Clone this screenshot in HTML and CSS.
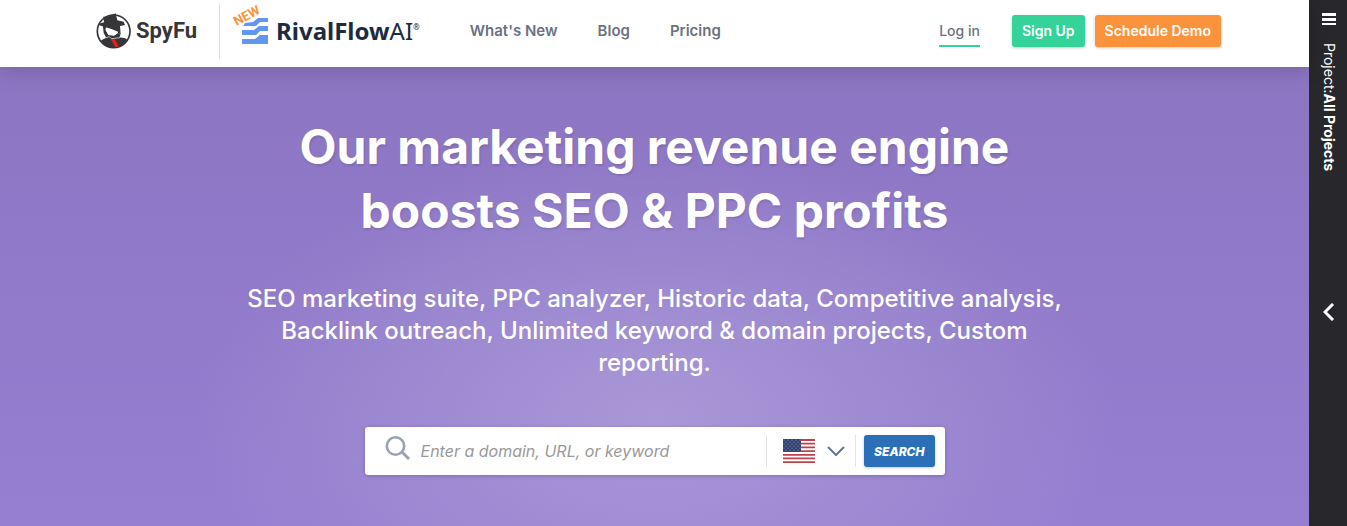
FILE: index.html
```html
<!DOCTYPE html>
<html lang="en">
<head>
    <meta charset="UTF-8">
    <meta name="viewport" content="width=device-width, initial-scale=1.0">
    <title>SpyFu</title>
    <link rel="stylesheet" href="styles.css">
</head>
<body>

<div class="page">
    <header class="header">
        <a href="#" class="logo">
            <svg class="logo-icon" width="36" height="36" viewBox="0 0 108 108">
                <circle cx="53" cy="55" r="49" fill="#fff" stroke="#363638" stroke-width="5"/>
                <path d="M22 11 L34 11 L59 1 L64 22 L83 26 L87 36 L72 39 L74 64 L66 61 L66 56 L46 48 L10 37 L8 32 L24 28 Z" fill="#363638"/>
                <path d="M20 34 L32 37 L28 50 L37 66 L54 68 L66 60 L74 65 L70 73 L88 76 L94 80 L80 96 L66 104 L42 104 L24 94 L14 84 L30 73 L23 60 Z" fill="#363638"/>
                <path d="M33 48 L64 57 L63 62 L53 67 L38 66 L31 54 Z" fill="#fff"/>
                <path d="M24 76 L40 71 L46 77 L56 76 L72 74" fill="none" stroke="#fff" stroke-width="2"/>
                <path d="M44 79 L56 78 L61 87 L68 102 L58 102 Z" fill="#ed1c24"/>
            </svg>
            <span class="logo-text">SpyFu</span>
        </a>
        <a href="#" class="rival">
            <span class="badge-new">NEW</span>
            <svg width="26" height="26" viewBox="0 0 26 26" fill="#6296f3">
                <path d="M3 5 L11 4 L16 0 H26 V4 H18 L14 8 H1 Z"/>
                <path d="M0 12 H12 L17 8 H26 V13 H18 L14 17 H0 Z"/>
                <path d="M0 21 H13 L18 17 H26 V26 H0 Z"/>
            </svg>
            <span class="rival-text">RivalFlow<span class="thin">AI</span><sup>®</sup></span>
        </a>
        <nav class="nav">
            <a href="#">What's New</a>
            <a href="#">Blog</a>
            <a href="#">Pricing</a>
        </nav>
        <div class="account">
            <a href="#" class="login">Log in</a>
            <button type="button" class="btn btn-green">Sign Up</button>
            <button type="button" class="btn btn-orange">Schedule Demo</button>
        </div>
    </header>

    <main class="hero">
        <h1>Our marketing revenue engine<br>boosts SEO &amp; PPC profits</h1>
        <p>SEO marketing suite, PPC analyzer, Historic data, Competitive analysis, Backlink outreach, Unlimited keyword &amp; domain projects, Custom reporting.</p>
        <form class="search">
            <label for="query" class="search-icon">
                <svg width="26" height="26" viewBox="0 0 26 26" fill="none" stroke="#9aa3b2" aria-label="Search">
                    <circle cx="10.5" cy="10" r="8.7" stroke-width="2.6"/>
                    <path d="M17 16 L24 23" stroke-width="3"/>
                </svg>
            </label>
            <input type="text" id="query" name="query" placeholder="Enter a domain, URL, or keyword">
            <div class="country">
                <svg width="32" height="24" viewBox="0 0 32 24">
                    <defs>
                        <pattern id="stars" width="4" height="4" patternUnits="userSpaceOnUse">
                            <circle cx="1" cy="1" r=".6" fill="#b4bdd2"/>
                            <circle cx="3" cy="3" r=".6" fill="#b4bdd2"/>
                        </pattern>
                    </defs>
                    <rect width="32" height="24" fill="#fff"/>
                    <path d="M0 1H32M0 4.7H32M0 8.4H32M0 12.1H32M0 15.8H32M0 19.4H32M0 23.1H32" stroke="#c1424c" stroke-width="1.8"/>
                    <rect width="18" height="13" fill="#2e3f70"/>
                    <rect width="18" height="13" fill="url(#stars)"/>
                </svg>
                <svg width="18" height="10" viewBox="0 0 18 10" fill="none" stroke="#5f7590" stroke-width="2">
                    <path d="M1 1 L9 9 L17 1"/>
                </svg>
                <select name="country" aria-label="Country">
                    <option>US</option>
                </select>
            </div>
            <button type="submit" class="btn btn-search">SEARCH</button>
        </form>
    </main>
</div>

<aside class="sidebar">
    <button type="button" class="menu" aria-label="Menu">
        <svg width="14" height="13" viewBox="0 0 14 13" fill="#fff">
            <path d="M0 0H14V3H0ZM0 5H14V8H0ZM0 10H14V12H0Z"/>
        </svg>
    </button>
    <div class="project">Project:<b>All Projects</b></div>
    <button type="button" class="expand" aria-label="Expand">
        <svg width="12" height="18" viewBox="0 0 12 18" fill="none" stroke="#fff" stroke-width="3">
            <path d="M10 1 L2 9 L10 17"/>
        </svg>
    </button>
</aside>

</body>
</html>
```
FILE: styles.css
```css
* {
    box-sizing: border-box;
}

body {
    margin: 0;
    min-height: 100vh;
    display: flex;
    font-family: Inter, sans-serif;
    background-color: #28272c;
}

a {
    text-decoration: none;
}

button {
    font-family: inherit;
    border: none;
    cursor: pointer;
}

svg {
    display: block;
}

.page {
    flex: 1;
    display: flex;
    flex-direction: column;
}

/* header */
.header {
    position: relative;
    display: flex;
    align-items: center;
    height: 67px;
    padding: 0 88px 6px 96px;
    background: #fff;
    box-shadow: 0 4px 20px rgba(0, 0, 0, 0.15);
}

.logo {
    display: flex;
    align-items: center;
    gap: 4px;
    height: 56px;
    padding-right: 22px;
    border-right: 1px solid #e2e2e2;
}

.logo-text {
    font-family: Roboto, sans-serif;
    font-size: 22px;
    font-weight: 700;
    color: #363638;
}

.rival {
    position: relative;
    display: flex;
    align-items: center;
    gap: 8px;
    margin-left: 22px;
}

.rival-text {
    font-family: "Noto Sans", sans-serif;
    font-size: 24px;
    line-height: 32px;
    font-weight: 700;
    color: #1d2b40;
}

.rival-text .thin {
    font-weight: 400;
}

.rival-text sup {
    font-size: 8px;
    line-height: 8px;
    font-weight: 400;
    vertical-align: 10px;
}

.badge-new {
    position: absolute;
    left: -9px;
    top: -5px;
    font-family: Roboto, sans-serif;
    font-size: 13px;
    line-height: 12px;
    font-weight: 700;
    color: #fb923c;
    transform: rotate(-28deg);
}

.nav {
    display: flex;
    gap: 40px;
    margin-left: 50px;
}

.nav a {
    font-size: 15px;
    font-weight: 600;
    color: #6b7280;
}

.account {
    display: flex;
    align-items: center;
    gap: 10px;
    margin-left: auto;
}

.login {
    margin-right: 22px;
    padding: 6px 0 4px;
    border-bottom: 2px solid #34d399;
    font-size: 14px;
    line-height: 20px;
    font-weight: 500;
    color: #6b7280;
}

.btn {
    height: 32px;
    padding: 0 10px;
    border-radius: 3px;
    font-size: 14px;
    font-weight: 600;
    color: #fff;
    box-shadow: 0 1px 3px rgba(0, 0, 0, 0.2);
}

.btn-green {
    background-color: #34d399;
}

.btn-orange {
    background-color: #fb923c;
}

/* hero */
.hero {
    flex: 1;
    padding: 48px 24px;
    text-align: center;
    color: #fff;
    background: radial-gradient(460px 270px at 50% 350px, #a998d7, rgba(150, 128, 206, 0)), linear-gradient(#8c75c2, #967fd1);
}

.hero h1 {
    margin: 0 0 40px;
    font-size: 48px;
    line-height: 64px;
    font-weight: 700;
    text-shadow: 1px 2px 2px rgba(0, 0, 0, 0.1);
}

.hero p {
    max-width: 832px;
    margin: 0 auto 48px;
    font-size: 24px;
    line-height: 32px;
    font-weight: 500;
}

/* search bar */
.search {
    display: flex;
    align-items: center;
    max-width: 580px;
    height: 48px;
    margin: 0 auto;
    padding: 0 10px 0 20px;
    border-radius: 3px;
    background: #fff;
    box-shadow: 0 1px 4px rgba(0, 0, 0, 0.2);
}

.search-icon {
    padding-bottom: 4px;
}

.search input {
    flex: 1;
    min-width: 0;
    padding: 0 10px;
    border: none;
    outline: none;
    font-family: inherit;
    font-size: 16px;
    font-style: italic;
}

.search input::placeholder {
    color: #999;
}

.country {
    position: relative;
    display: flex;
    align-items: center;
    gap: 12px;
    height: 32px;
    margin-right: 8px;
    padding: 0 10px 0 16px;
    border: solid #e2e2e2;
    border-width: 0 1px;
}

.country select {
    position: absolute;
    inset: 0;
    width: 100%;
    opacity: 0;
    cursor: pointer;
}

.btn-search {
    background-color: #2b6fb9;
    font-size: 12px;
    font-weight: 800;
    font-style: italic;
}

/* sidebar */
.sidebar {
    display: flex;
    flex-direction: column;
    align-items: center;
    width: 38px;
    padding: 13px 0 0 2px;
    background: #28272c;
    color: #fff;
}

.sidebar button {
    padding: 0;
    background: none;
}

.project {
    margin-top: 17px;
    writing-mode: vertical-rl;
    font-size: 14px;
    line-height: 16px;
}

.expand {
    margin-top: 132px;
}
```
